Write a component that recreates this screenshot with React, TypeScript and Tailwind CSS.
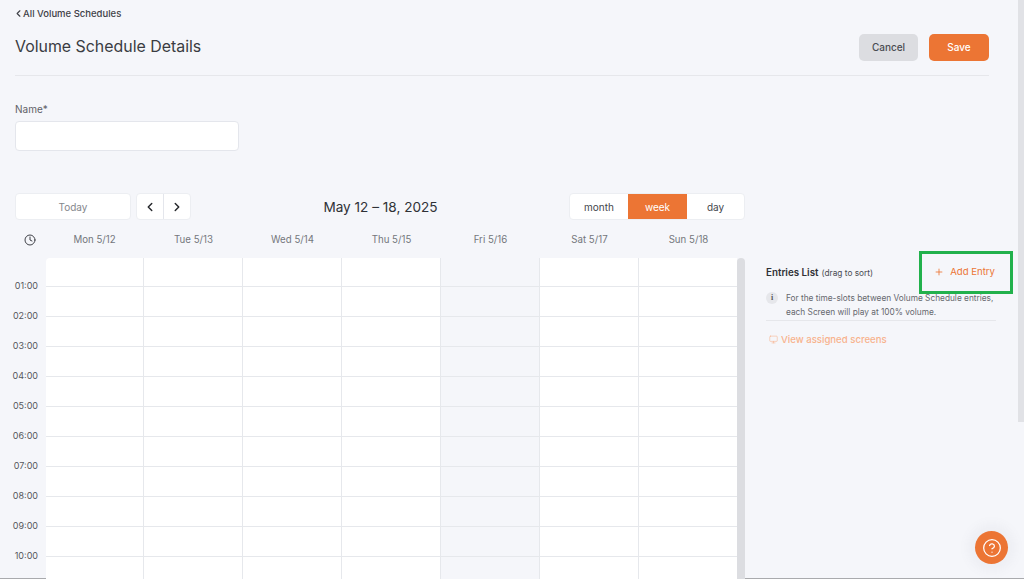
import React from "react";
import { ChevronLeft, ChevronRight, Clock, Plus, Monitor, CircleHelp } from "lucide-react";

const days = ["Mon 5/12", "Tue 5/13", "Wed 5/14", "Thu 5/15", "Fri 5/16", "Sat 5/17", "Sun 5/18"];
const hours = ["01:00", "02:00", "03:00", "04:00", "05:00", "06:00", "07:00", "08:00", "09:00", "10:00"];

export default function App() {
  return (
    <div className="relative h-[579px] w-[1024px] overflow-hidden bg-[#f5f6fa] font-['Inter',sans-serif] text-[#3f4147]">
      <div className="flex h-[578px] w-full">
        <main className="w-[1018px] pl-[15px] pt-[7px]">
          <a className="flex h-[13px] items-center text-[9.5px] font-medium leading-[13px] text-[#3f4147]">
            <ChevronLeft size={11} strokeWidth={2.5} className="-ml-[2px] mr-[-1px]" />
            <span>All Volume Schedules</span>
          </a>

          <div className="mt-[7px] flex h-[40px] w-[974px] items-center justify-between">
            <h1 className="text-[15.9px] font-normal leading-[24px] text-[#3a3c42]">Volume Schedule Details</h1>
            <div className="flex gap-[11px]">
              <button className="h-[27px] w-[59px] rounded-[5px] bg-[#dcdde1] text-[10px] font-medium text-[#4a4c52]">Cancel</button>
              <button className="h-[27px] w-[60px] rounded-[5px] bg-[#ec7534] text-[10px] font-medium text-white">Save</button>
            </div>
          </div>

          <div className="mt-[8px] h-px w-[974px] bg-[#e6e7eb]" />

          <label className="mt-[27px] block h-[13px] text-[10px] leading-[13px] text-[#5f6167]">Name*</label>
          <input className="mt-[5px] block h-[30px] w-[224px] rounded-[4px] border border-[#e4e6ec] bg-white" />

          <div className="mt-[42px] flex w-[730px] items-center">
            <button className="h-[27px] w-[116px] rounded-[4px] border border-[#eceef2] bg-white pt-px text-[10px] text-[#85878c]">Today</button>
            <div className="ml-[5px] flex h-[27px] w-[55px] rounded-[4px] border border-[#eceef2] bg-white">
              <button className="flex flex-1 items-center justify-center border-r border-[#e4e6ec] text-[#26282c]">
                <ChevronLeft size={14} strokeWidth={2.5} />
              </button>
              <button className="flex flex-1 items-center justify-center text-[#26282c]">
                <ChevronRight size={14} strokeWidth={2.5} />
              </button>
            </div>
            <div className="flex-1 pl-[1px] text-center text-[13.6px] leading-[20px] text-[#2f3136]">May 12 – 18, 2025</div>
            <div className="flex h-[27px] w-[176px] rounded-[4px] border border-[#eceef2] bg-white text-[10px] text-[#44464c]">
              <span className="flex w-[58px] items-center justify-center pt-px">month</span>
              <span className="flex w-[59px] items-center justify-center bg-[#ec7534] pt-px text-white">week</span>
              <span className="flex flex-1 items-center justify-center pt-px">day</span>
            </div>
          </div>

          <div className="-ml-[15px] flex">
            <div className="flex-1">
              <div className="mt-[13px] flex h-[14px] items-center">
                <div className="flex w-[45px] justify-center pl-[15px]">
                  <Clock size={12} strokeWidth={2} className="text-[#3f4147]" />
                </div>
                {days.map((d) => (
                  <div key={d} className="w-[99px] pt-px text-center text-[9.7px] text-[#74767c]">{d}</div>
                ))}
              </div>

              <div className="mt-[11px] flex h-[330px]">
                <div className="w-[46px]">
                  {hours.map((h) => (
                    <div key={h} className="flex h-[30px] items-end justify-end pr-[8px] text-[9px] leading-[12px] text-[#55575c] first:h-[29px]">
                      <span className="translate-y-[5px]">{h}</span>
                    </div>
                  ))}
                </div>
                <div className="relative flex h-full w-[691px] overflow-hidden rounded-tl-[4px] bg-white">
                  {days.map((d, i) => (
                    <div
                      key={d}
                      className={`h-full shrink-0 border-r border-[#e6e8ec] ${i === 0 ? "w-[98px]" : "w-[99px]"} ${i === 4 ? "bg-[#f5f6fa]" : ""}`}
                    >
                      {Array.from({ length: 11 }).map((_, r) => (
                        <div key={r} className={`border-b border-[#e6e8ec] ${r === 0 ? "h-[29px]" : "h-[30px]"}`} />
                      ))}
                    </div>
                  ))}
                </div>
                <div className="h-full w-[8px] rounded-t-[4px] bg-[#dcdde1]" />
              </div>
            </div>

            <aside className="absolute left-[766px] top-[263px] w-[230px]">
              <div className="flex h-[17px] items-center justify-between">
                <div className="leading-[17px] text-[#2f3136]">
                  <span className="text-[9.8px] font-semibold">Entries List</span>
                  <span className="ml-[3px] text-[8.3px] text-[#4a4c52]">(drag to sort)</span>
                </div>
                <button className="flex items-center pr-[1px] pt-px text-[9.6px] text-[#ec7534]">
                  <Plus size={10} strokeWidth={2} />
                  <span className="ml-[6px]">Add Entry</span>
                </button>
              </div>
              <div className="mt-[11px] flex border-b border-[#e6e7eb] pb-[1px]">
                <div className="mt-[1px] flex h-[12px] w-[12px] shrink-0 items-center justify-center rounded-full bg-[#e6e7eb] text-[#55575c]">
                  <span className="font-['Liberation_Serif',serif] text-[8px] font-bold leading-none">i</span>
                </div>
                <p className="ml-[8px] whitespace-nowrap text-[8.3px] leading-[14px] text-[#66686e]">
                  For the time-slots between Volume Schedule entries,
                  <br />
                  each Screen will play at 100% volume.
                </p>
              </div>
              <div className="mt-[12px] flex items-center pl-[3px] text-[9.6px] text-[#f8b28c]">
                <Monitor size={9} strokeWidth={1.5} className="mr-[3px] -translate-y-[1px]" />
                <span className="font-medium">View assigned screens</span>
              </div>
            </aside>
          </div>
        </main>
        <div className="h-[422px] w-[6px] bg-[#e1e2e6]" />
      </div>
      <div className="h-px w-full bg-[#a9aaad]" />

      <div className="absolute left-[919px] top-[251px] h-[43px] w-[94px] border-[3px] border-[#22b14c]" />

      <button className="absolute left-[975px] top-[531px] flex h-[33px] w-[33px] items-center justify-center rounded-full bg-[#ec7534] text-white shadow-[0_0_10px_8px_rgba(120,125,135,0.05)]">
        <CircleHelp size={20} strokeWidth={1.5} />
      </button>
    </div>
  );
}
